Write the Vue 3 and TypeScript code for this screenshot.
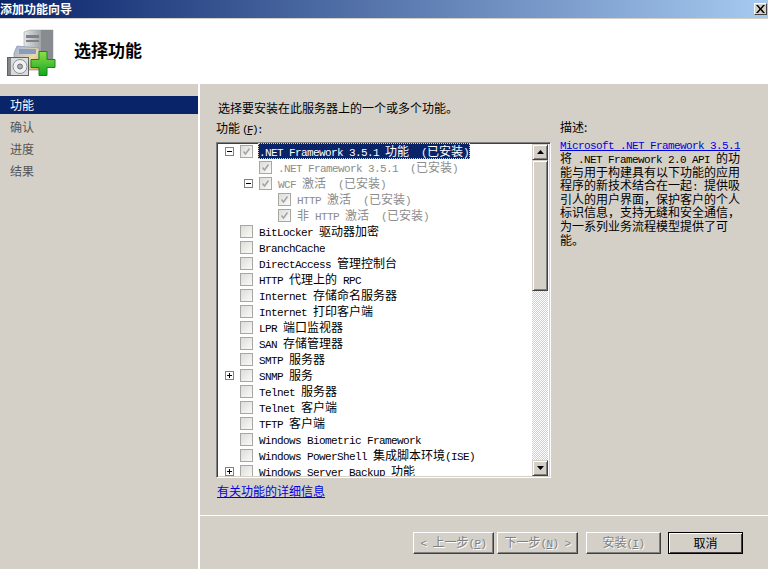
<script setup lang="ts">
interface Row { t: string; d: number; exp?: '+' | '-'; chk?: boolean; dis?: boolean; sel?: boolean }
const rows: Row[] = [
  { t: '.NET Framework 3.5.1 功能  (已安装)', d: 0, exp: '-', chk: true, dis: true, sel: true },
  { t: '.NET Framework 3.5.1  (已安装)', d: 1, chk: true, dis: true },
  { t: 'WCF 激活  (已安装)', d: 1, exp: '-', chk: true, dis: true },
  { t: 'HTTP 激活  (已安装)', d: 2, chk: true, dis: true },
  { t: '非 HTTP 激活  (已安装)', d: 2, chk: true, dis: true },
  { t: 'BitLocker 驱动器加密', d: 0 },
  { t: 'BranchCache', d: 0 },
  { t: 'DirectAccess 管理控制台', d: 0 },
  { t: 'HTTP 代理上的 RPC', d: 0 },
  { t: 'Internet 存储命名服务器', d: 0 },
  { t: 'Internet 打印客户端', d: 0 },
  { t: 'LPR 端口监视器', d: 0 },
  { t: 'SAN 存储管理器', d: 0 },
  { t: 'SMTP 服务器', d: 0 },
  { t: 'SNMP 服务', d: 0, exp: '+' },
  { t: 'Telnet 服务器', d: 0 },
  { t: 'Telnet 客户端', d: 0 },
  { t: 'TFTP 客户端', d: 0 },
  { t: 'Windows Biometric Framework', d: 0 },
  { t: 'Windows PowerShell 集成脚本环境(ISE)', d: 0 },
  { t: 'Windows Server Backup 功能', d: 0, exp: '+' },
]
const desc = [
  '将 .NET Framework 2.0 API 的功',
  '能与用于构建具有以下功能的应用',
  '程序的新技术结合在一起: 提供吸',
  '引人的用户界面，保护客户的个人',
  '标识信息，支持无缝和安全通信，',
  '为一系列业务流程模型提供了可',
  '能。',
]
const nav = ['功能', '确认', '进度', '结果']
const buttons = [
  { a: '< 上一步(', k: 'P', b: ')', w: 81 },
  { a: '下一步(', k: 'N', b: ') >', w: 81 },
  { a: '安装(', k: 'I', b: ')', w: 75 },
]
function segs(s: string) {
  return s.split(/([\u0000-\u00ff]+)/).filter(Boolean).map((t) => ({
    t,
    c: /^[\u0000-\u00ff]/.test(t) ? 'lat' : 'cjk',
  }))
}
</script>

<template>
  <div class="win">
    <div class="titlebar">
      <span class="title">添加功能向导</span>
      <span class="close">
        <svg width="9" height="8" viewBox="0 0 9 8"><path d="M0 0h2l2.500 3 2.500-3h2l-3.500 4 3.500 4h-2l-2.500-3-2.500 3h-2l3.500-4z" fill="#000" /></svg>
      </span>
    </div>
    <div class="header">
      <svg class="logo" width="50" height="50" viewBox="0 0 50 50">
        <defs>
          <linearGradient id="srv" x1="0" x2="1" y1="0" y2="0">
            <stop offset="0" stop-color="#e4e6e8" />
            <stop offset="0.5" stop-color="#a9adb0" />
            <stop offset="1" stop-color="#777b7f" />
          </linearGradient>
          <linearGradient id="grn" x1="0" x2="0" y1="0" y2="1">
            <stop offset="0" stop-color="#8ee04a" />
            <stop offset="1" stop-color="#13a51f" />
          </linearGradient>
          <linearGradient id="box" x1="0" x2="1" y1="0" y2="1">
            <stop offset="0" stop-color="#9fb2d6" />
            <stop offset="0.6" stop-color="#e8d9a8" />
            <stop offset="1" stop-color="#d79b3c" />
          </linearGradient>
        </defs>
        <path d="M18 5l6-2h23v33H18z" fill="url(#srv)" stroke="#a0a4a8" stroke-width="0.600" />
        <path d="M35 3h12v33H35z" fill="#888c90" />
        <path d="M20 8h13v3H20zM20 13h13v2H20z" fill="#7d8185" />
        <path d="M8 26l3-7 22 2v22H8z" fill="url(#box)" stroke="#8a94ad" stroke-width="0.700" />
        <path d="M13 22h17v5H13z" fill="#8b9ac0" />
        <rect x="1.500" y="30.500" width="21" height="18" fill="#dcdcdc" stroke="#5f6266" />
        <rect x="2" y="31" width="3" height="17" fill="#85888b" />
        <circle cx="14" cy="39.500" r="7" fill="#eef0f2" stroke="#8b8f93" />
        <circle cx="14" cy="39.500" r="2.500" fill="#a8acb0" stroke="#6c7074" />
        <path d="M33 24.500h8v8h8v8h-8v8h-8v-8h-8v-8h8z" fill="url(#grn)" stroke="#0e8a1a" />
      </svg>
      <span class="heading">选择功能</span>
    </div>
    <div class="body">
      <nav class="nav">
        <div v-for="(n, i) in nav" :key="n" class="nav-item" :class="{ active: i === 0 }">{{ n }}</div>
      </nav>
      <div class="right">
        <div class="content">
          <div class="col-main">
            <div class="intro">选择要安装在此服务器上的一个或多个功能。</div>
            <div class="label"><span class="cjk">功能</span><span class="lat hot">(<u>F</u>):</span></div>
            <div class="listbox">
              <div class="rows">
                <div v-for="r in rows" :key="r.t" class="row" :class="['d' + r.d, { dim: r.dis && !r.sel }]">
                  <span class="exp-slot">
                    <span v-if="r.exp" class="exp">
                      <svg width="9" height="9" viewBox="0 0 9 9">
                        <path d="M2 4.500h5" stroke="#000" fill="none" />
                        <path v-if="r.exp === '+'" d="M4.500 2v5" stroke="#000" fill="none" />
                      </svg>
                    </span>
                  </span>
                  <span class="chk" :class="{ off: r.dis }">
                    <svg v-if="r.chk" width="11" height="11" viewBox="0 0 11 11">
                      <path d="M2.500 5.500l2 2.500 4-5.500" stroke="#a3a3a3" stroke-width="1.500" fill="none" />
                    </svg>
                  </span>
                  <span class="txt" :class="{ sel: r.sel }"><span v-for="(s, i) in segs(r.t)" :key="i" :class="s.c">{{ s.t }}</span></span>
                </div>
              </div>
              <div class="scroll">
                <div class="sbtn"><svg width="7" height="4" viewBox="0 0 7 4"><path d="M3.500 0L7 4H0z" /></svg></div>
                <div class="thumb"></div>
                <div class="track"></div>
                <div class="sbtn"><svg width="7" height="4" viewBox="0 0 7 4"><path d="M0 0h7L3.500 4z" /></svg></div>
              </div>
            </div>
            <a class="more">有关功能的详细信息</a>
          </div>
          <div class="col-desc">
            <div class="desc-label">描述:</div>
            <a class="desc-link lat">Microsoft .NET Framework 3.5.1</a>
            <div v-for="l in desc" :key="l" class="desc-line"><span v-for="(s, i) in segs(l)" :key="i" :class="s.c">{{ s.t }}</span></div>
          </div>
        </div>
        <div class="footer">
          <button v-for="b in buttons" :key="b.k" class="btn disabled" :style="{ width: b.w + 'px' }"><span v-for="(s, i) in segs(b.a)" :key="i" :class="s.c">{{ s.t }}</span><u class="lat">{{ b.k }}</u><span class="lat">{{ b.b }}</span></button>
          <button class="btn default"><span class="cjk">取消</span></button>
        </div>
      </div>
    </div>
  </div>
</template>

<style scoped>
.win {
  width: 768px;
  height: 569px;
  display: flex;
  flex-direction: column;
  background: #d4d0c8;
  color: #000;
  overflow: hidden;
  font-family: "Noto Sans CJK SC", "Liberation Sans", sans-serif;
  font-size: 12px;
}
.cjk {
  font-family: "Noto Sans CJK SC", sans-serif;
  font-size: 12px;
}
.lat {
  font-family: "Liberation Mono", monospace;
  font-size: 11px;
  letter-spacing: -0.600px;
  white-space: pre;
}
.hot {
  margin-left: 2px;
  letter-spacing: -1.600px;
}
.titlebar {
  height: 19px;
  flex: none;
  box-sizing: border-box;
  display: flex;
  align-items: center;
  justify-content: space-between;
  padding-right: 1px;
  background: linear-gradient(90deg, #0a246a, #a6caf0);
  border-bottom: 1px solid #d4d0c8;
}
.title {
  color: #fff;
  font-weight: 700;
  line-height: 18px;
}
.close {
  width: 13px;
  height: 12px;
  display: flex;
  align-items: center;
  justify-content: center;
  box-sizing: border-box;
  background: #d4d0c8;
  border: 1px solid;
  border-color: #fff #404040 #404040 #fff;
}
.header {
  height: 65px;
  flex: none;
  display: flex;
  align-items: center;
  background: #fff;
  padding-left: 6px;
  box-sizing: border-box;
}
.logo {
  flex: none;
  margin-top: 1px;
}
.heading {
  margin-left: 18px;
  font-size: 17px;
  font-weight: 700;
  line-height: 20px;
  margin-top: -4px;
}
.body {
  flex: 1;
  display: flex;
  min-height: 0;
}
.nav {
  width: 198px;
  flex: none;
  padding-top: 12px;
  border-right: 2px solid #fff;
}
.nav-item {
  height: 22px;
  line-height: 20px;
  padding-left: 10px;
  color: #555;
}
.nav-item.active {
  height: 18px;
  line-height: 17px;
  margin-bottom: 3px;
  background: #0a246a;
  color: #fff;
}
.right {
  flex: 1;
  min-width: 0;
  display: flex;
  flex-direction: column;
}
.content {
  height: 432px;
  flex: none;
  box-sizing: border-box;
  padding: 15px 0 0 16px;
  display: flex;
  border-bottom: 1px solid #fff;
}
.col-main {
  width: 335px;
  flex: none;
}
.intro {
  height: 17px;
  line-height: 17px;
  padding-left: 2px;
}
.label {
  height: 24px;
  line-height: 20px;
  margin-top: 2px;
  box-sizing: border-box;
}
.listbox {
  height: 336px;
  box-sizing: border-box;
  display: flex;
  background: #fff;
  border: 1px solid;
  border-color: #808080 #fff #fff #808080;
  box-shadow: inset 1px 1px 0 #404040, inset -1px -1px 0 #d4d0c8;
  padding: 1px 2px 1px 1px;
}
.rows {
  flex: 1;
  min-width: 0;
  height: calc(100% + 1px);
  margin-top: -1px;
  overflow: hidden;
}
.row {
  height: 16px;
  display: flex;
  align-items: center;
  white-space: pre;
  line-height: 14px;
}
.row.dim {
  color: #8c8c8c;
}
.exp-slot {
  flex: none;
  display: flex;
  justify-content: flex-end;
  box-sizing: border-box;
}
.exp {
  width: 9px;
  height: 9px;
  box-sizing: border-box;
  display: block;
  outline: 1px solid #808080;
  outline-offset: -1px;
  background: #fff;
}
.exp svg {
  display: block;
}
.d0 .exp-slot {
  width: 16px;
}
.d1 .exp-slot {
  width: 35px;
}
.d2 .exp-slot {
  width: 54px;
}
.chk {
  width: 13px;
  height: 13px;
  flex: none;
  margin-left: 6px;
  box-sizing: border-box;
  display: flex;
  align-items: center;
  justify-content: center;
  border: 1px solid #a8a8a0;
  background: linear-gradient(135deg, #dcdcd8, #fafafa);
}
.txt {
  margin-left: 5px;
  padding: 0 1px;
  height: 16px;
  line-height: 15px;
}
.txt.sel {
  background: #0a246a;
  color: #fff;
  outline: 1px dotted #d4d0c8;
  outline-offset: -1px;
}
.scroll {
  width: 16px;
  flex: none;
  display: flex;
  flex-direction: column;
}
.sbtn {
  height: 16px;
  flex: none;
  box-sizing: border-box;
  display: flex;
  align-items: center;
  justify-content: center;
  background: #d4d0c8;
  border: 1px solid;
  border-color: #d4d0c8 #404040 #404040 #d4d0c8;
  box-shadow: inset 1px 1px 0 #fff, inset -1px -1px 0 #808080;
}
.thumb {
  height: 131px;
  flex: none;
  box-sizing: border-box;
  background: #d4d0c8;
  border: 1px solid;
  border-color: #d4d0c8 #404040 #404040 #d4d0c8;
  box-shadow: inset 1px 1px 0 #fff, inset -1px -1px 0 #808080;
}
.track {
  flex: 1;
  background: repeating-conic-gradient(#fff 0 25%, #d4d0c8 0 50%) 0 0 / 2px 2px;
}
.more {
  display: block;
  margin-top: 4px;
  padding-left: 1px;
  line-height: 18px;
  color: #0000e0;
  text-decoration: underline;
}
.col-desc {
  margin-left: 9px;
  width: 195px;
}
.desc-label {
  height: 17px;
  line-height: 17px;
  margin-top: 19px;
  margin-bottom: 5px;
}
.desc-link {
  display: block;
  height: 11px;
  line-height: 13px;
  color: #0000e0;
  text-decoration: underline;
}
.desc-line {
  height: 13.600px;
  line-height: 13.600px;
  white-space: pre;
}
.footer {
  flex: 1;
  display: flex;
  align-items: flex-start;
  padding: 16px 0 0 213px;
  gap: 3px;
}
.btn {
  height: 22px;
  padding: 0;
  box-sizing: border-box;
  background: #d4d0c8;
  border: 1px solid;
  border-color: #fff #404040 #404040 #fff;
  box-shadow: inset -1px -1px 0 #808080;
  line-height: 18px;
  white-space: pre;
}
.btn.disabled {
  color: #808080;
  text-shadow: 1px 1px 0 #fff;
}
.btn.disabled:nth-child(3) {
  margin-left: 5px;
}
.btn.default {
  width: 75px;
  margin-left: 4px;
  border: 1px solid #000;
  box-shadow: inset 1px 1px 0 #fff, inset -1px -1px 0 #404040;
  color: #000;
}
</style>
